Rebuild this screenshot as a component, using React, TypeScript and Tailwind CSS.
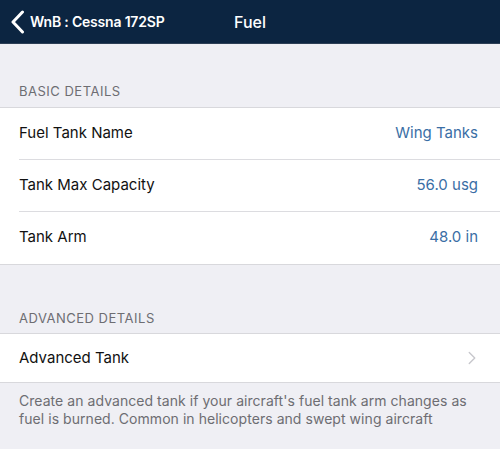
import { ChevronRight } from 'lucide-react'

type Row = { label: string; value: string }

const basic: Row[] = [
  { label: 'Fuel Tank Name', value: 'Wing Tanks' },
  { label: 'Tank Max Capacity', value: '56.0 usg' },
  { label: 'Tank Arm', value: '48.0 in' },
]

export default function App() {
  return (
    <div className="w-[500px] h-[449px] overflow-hidden bg-[#efeff4] font-['Inter','Liberation_Sans',sans-serif]">
      {/* Nav bar */}
      <div className="relative h-[44px] bg-[#0c2541] border-b border-[#2c3e55] flex items-center">
        <div className="flex items-center pl-[10px] text-white">
          <svg width="15" height="24" viewBox="0 0 15 24" fill="none" className="mr-[5px]">
            <path d="M12.5 2 L3 12 L12.5 22" stroke="white" strokeWidth="3" strokeLinecap="round" strokeLinejoin="round" />
          </svg>
          <span className="text-[14px] font-semibold tracking-[-0.2px]">WnB : Cessna 172SP</span>
        </div>
        <div className="absolute left-0 right-0 top-0 h-full flex items-center justify-center pointer-events-none">
          <span className="text-white text-[16px] font-medium">Fuel</span>
        </div>
      </div>

      {/* Basic details */}
      <div className="pt-[38px] pb-[5px] px-[19px] text-[13px] text-[#6d6d72] uppercase tracking-[0.5px]">
        Basic Details
      </div>
      <div className="bg-white border-y border-[#d8d8dc]">
        {basic.map((r, i) => (
          <div key={r.label} className="pl-[19px]">
            <div className={`h-[52px] flex items-center justify-between pr-[22px] ${i < basic.length - 1 ? 'border-b border-[#dcdce0]' : ''}`}>
              <span className="text-[15px] text-[#111]">{r.label}</span>
              <span className="text-[15px] text-[#3a6ea5]">{r.value}</span>
            </div>
          </div>
        ))}
      </div>

      {/* Advanced details */}
      <div className="pt-[44px] pb-[5px] px-[19px] text-[13px] text-[#6d6d72] uppercase tracking-[0.5px]">
        Advanced Details
      </div>
      <div className="bg-white border-y border-[#d8d8dc] h-[50px] flex items-center justify-between pl-[19px] pr-[17px]">
        <span className="text-[15px] text-[#111]">Advanced Tank</span>
        <ChevronRight size={22} strokeWidth={1.5} className="text-[#c7c7cc]" />
      </div>
      <p className="px-[19px] pt-[9px] text-[14px] leading-[18px] tracking-[0.05px] text-[#6d6d72]">
        Create an advanced tank if your aircraft's fuel tank arm changes as fuel is burned. Common in helicopters and swept wing aircraft
      </p>
    </div>
  )
}
